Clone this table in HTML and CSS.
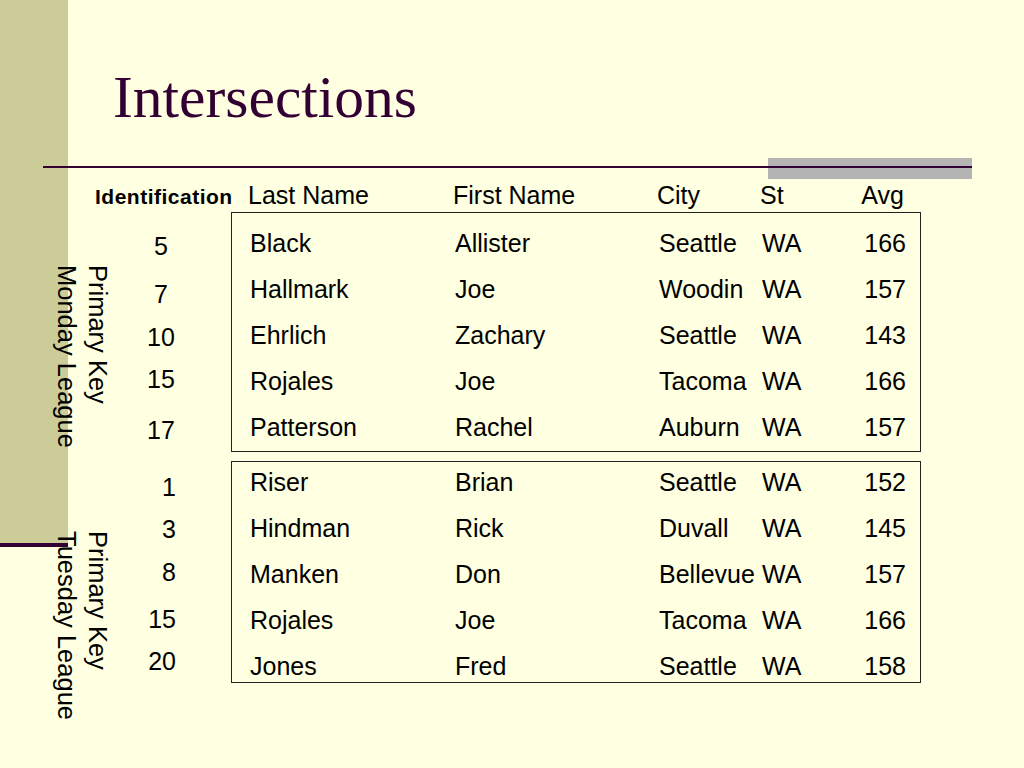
FILE: index.html
```html
<!DOCTYPE html>
<html lang="en">
<head>
<meta charset="utf-8">
<title>Intersections</title>
<link rel="stylesheet" href="styles.css">
</head>
<body>
<div class="sidebar"></div>
<main class="slide">
  <h1 class="title">Intersections</h1>
  <div class="rule"></div>

  <div class="head">
    <div class="lead"><span class="ident">Identification</span></div>
    <div class="cols cols-head">
      <span>Last Name</span><span>First Name</span><span>City</span><span>St</span><span class="num">Avg</span>
    </div>
  </div>

  <section class="group g1">
    <div class="lead">
      <div class="label">Primary Key<br>Monday League</div>
      <div class="ids">
        <span>5</span><span>7</span><span>10</span><span>15</span><span>17</span>
      </div>
    </div>
    <div class="box">
      <div class="rows">
        <div class="cols"><span>Black</span><span>Allister</span><span>Seattle</span><span>WA</span><span class="num">166</span></div>
        <div class="cols"><span>Hallmark</span><span>Joe</span><span>Woodin</span><span>WA</span><span class="num">157</span></div>
        <div class="cols"><span>Ehrlich</span><span>Zachary</span><span>Seattle</span><span>WA</span><span class="num">143</span></div>
        <div class="cols"><span>Rojales</span><span>Joe</span><span>Tacoma</span><span>WA</span><span class="num">166</span></div>
        <div class="cols"><span>Patterson</span><span>Rachel</span><span>Auburn</span><span>WA</span><span class="num">157</span></div>
      </div>
    </div>
  </section>

  <section class="group g2">
    <div class="lead">
      <div class="label">Primary Key<br>Tuesday League</div>
      <div class="ids">
        <span>1</span><span>3</span><span>8</span><span>15</span><span>20</span>
      </div>
    </div>
    <div class="box">
      <div class="rows">
        <div class="cols"><span>Riser</span><span>Brian</span><span>Seattle</span><span>WA</span><span class="num">152</span></div>
        <div class="cols"><span>Hindman</span><span>Rick</span><span>Duvall</span><span>WA</span><span class="num">145</span></div>
        <div class="cols"><span>Manken</span><span>Don</span><span>Bellevue</span><span>WA</span><span class="num">157</span></div>
        <div class="cols"><span>Rojales</span><span>Joe</span><span>Tacoma</span><span>WA</span><span class="num">166</span></div>
        <div class="cols"><span>Jones</span><span>Fred</span><span>Seattle</span><span>WA</span><span class="num">158</span></div>
      </div>
    </div>
  </section>
</main>
</body>
</html>
```

FILE: styles.css
```css
html, body {
  margin: 0;
  padding: 0;
}

body {
  width: 1024px;
  height: 768px;
  overflow: hidden;
  position: relative;
  background: #ffffe1;
  color: #000;
  font-family: "Liberation Sans", Arial, sans-serif;
  font-size: 25px;
}

.sidebar {
  position: absolute;
  left: 0;
  top: 0;
  width: 68px;
  height: 543px;
  background: #cccc99;
  border-bottom: 4px solid #330033;
  z-index: 0;
}

.slide {
  position: relative;
  z-index: 1;
  display: flex;
  flex-direction: column;
}

.title {
  margin: 67px 0 0 113px;
  font-family: "Liberation Serif", "Times New Roman", serif;
  font-weight: normal;
  font-size: 59.5px;
  line-height: 60px;
  color: #330033;
}

.rule {
  margin: 31px 0 0 43px;
  width: 929px;
  height: 21px;
  background-image:
    linear-gradient(#330033, #330033),
    linear-gradient(#b4b4b4, #b4b4b4);
  background-repeat: no-repeat;
  background-size: 100% 2px, 204px 100%;
  background-position: 0 8px, right top;
}

.head {
  margin-top: 2px;
  height: 31px;
  display: flex;
  align-items: baseline;
  line-height: 28px;
}

.lead {
  width: 231px;
  flex: none;
  box-sizing: border-box;
}

.head .lead {
  padding-left: 95px;
  white-space: nowrap;
}

.ident {
  font-weight: bold;
  font-size: 21px;
  letter-spacing: 0.5px;
}

.cols {
  display: grid;
  grid-template-columns: 205px 204px 103px 1fr auto;
  line-height: 28px;
  white-space: nowrap;
}

.cols .num {
  justify-self: end;
}

.cols-head {
  padding-left: 17px;
  width: 656px;
}

.group {
  display: flex;
  align-items: flex-start;
}

.group .lead {
  display: flex;
  align-items: flex-start;
}

.label {
  writing-mode: vertical-rl;
  font-size: 25.5px;
  line-height: 31px;
  white-space: nowrap;
  margin-left: 51px;
}

.ids {
  margin-left: 31px;
  width: 34px;
  display: flex;
  flex-direction: column;
  line-height: 28px;
  text-align: center;
}

.box {
  width: 690px;
  box-sizing: border-box;
  border: 1px solid #222;
}

.rows {
  display: flex;
  flex-direction: column;
  gap: 18px;
}

/* Monday group */
.g1 .label { margin-top: 53px; }
.g1 .box { padding: 16px 14px 10px 18px; }
.g1 .ids span:nth-child(1) { margin-top: 20px; }
.g1 .ids span:nth-child(2) { margin-top: 20px; }
.g1 .ids span:nth-child(3) { margin-top: 15px; }
.g1 .ids span:nth-child(4) { margin-top: 14px; }
.g1 .ids span:nth-child(5) { margin-top: 23px; }

/* Tuesday group */
.g2 { margin-top: 9px; }
.g2 .label { margin-top: 70px; }
.g2 .box { padding: 6px 14px 2px 18px; }
.g2 .ids { text-align: right; padding-right: 2px; box-sizing: border-box; }
.g2 .ids span:nth-child(1) { margin-top: 12px; }
.g2 .ids span:nth-child(2) { margin-top: 14px; }
.g2 .ids span:nth-child(3) { margin-top: 15px; }
.g2 .ids span:nth-child(4) { margin-top: 19px; }
.g2 .ids span:nth-child(5) { margin-top: 14px; }
```
